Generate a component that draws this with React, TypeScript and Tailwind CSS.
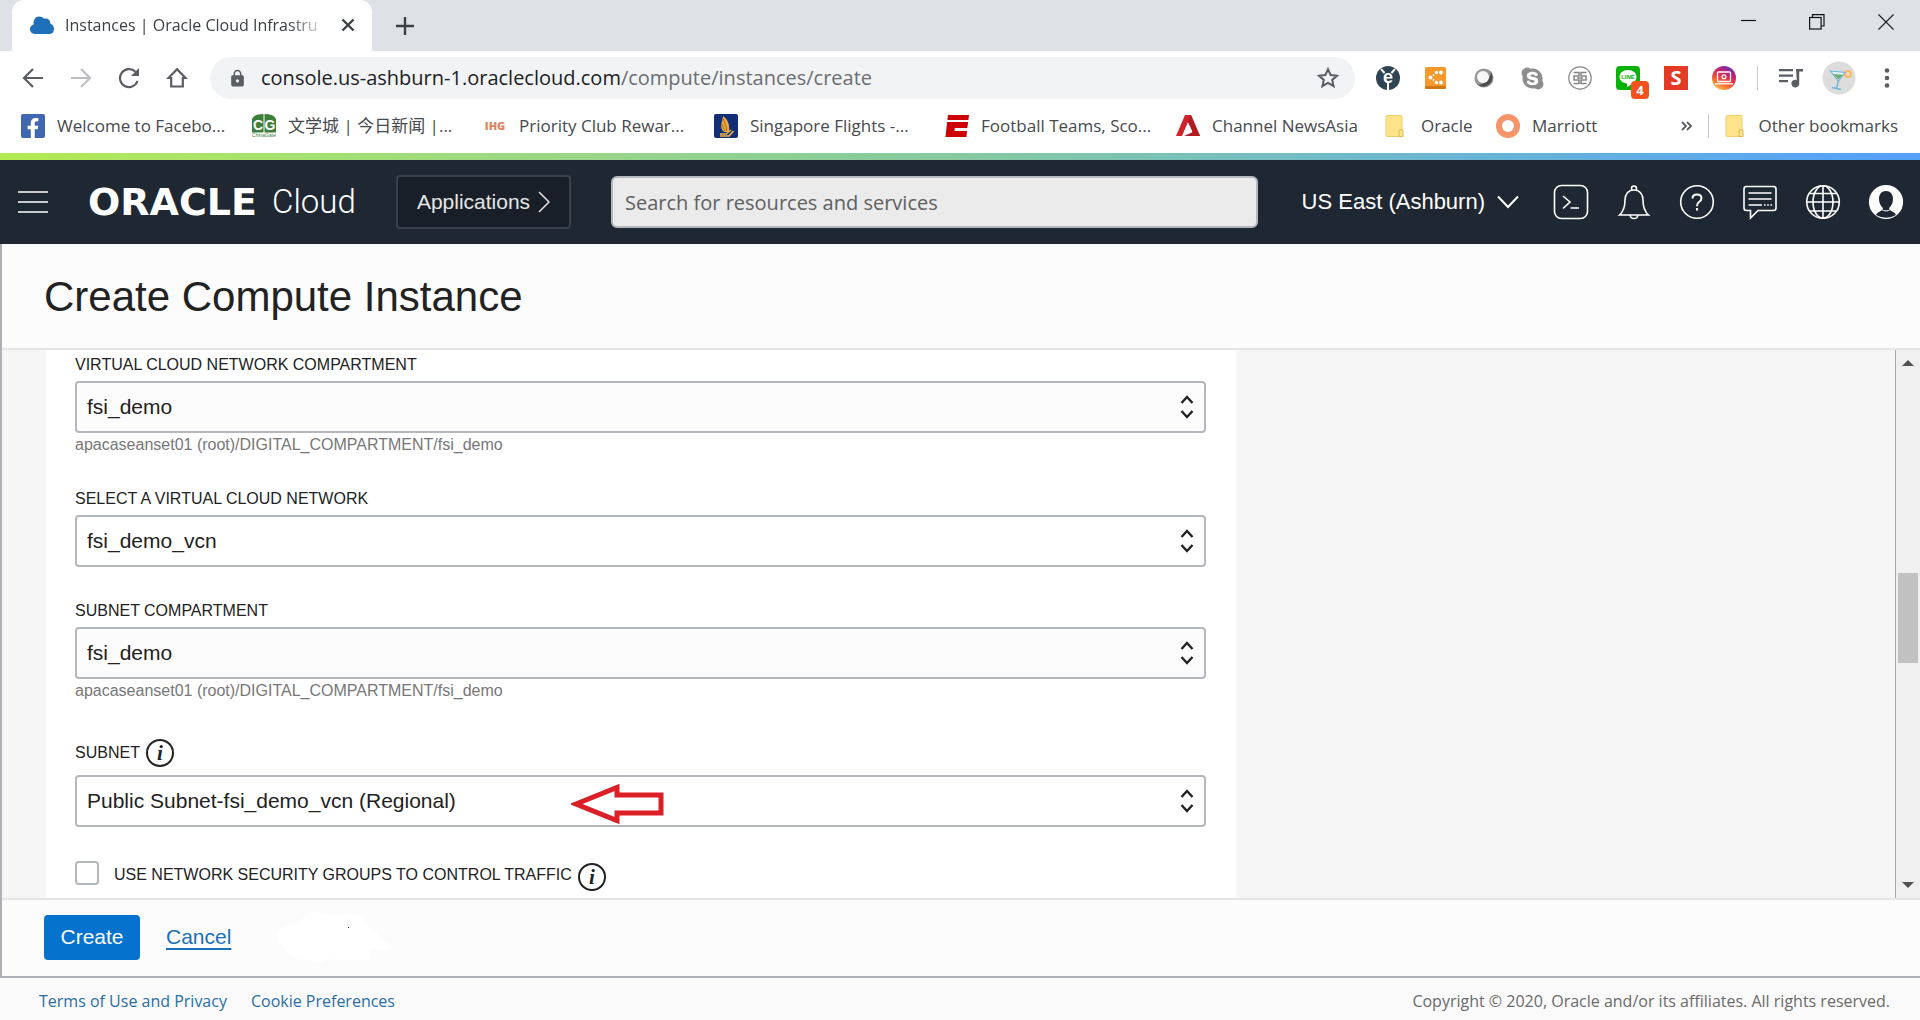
import React, { useState } from "react";
import { FaFacebookF, FaSkype } from "react-icons/fa";
import { MdLock } from "react-icons/md";

const UI = "font-['Open_Sans','Noto_Sans','Noto_Sans_CJK_SC',sans-serif]";
const ARIAL = "font-['Liberation_Sans',Arial,sans-serif]";

type Children = { children: React.ReactNode };

/* ---------- browser chrome ---------- */

function TabStrip() {
  return (
    <div className="flex h-[51px] items-stretch bg-[#dee1e6] pl-3">
      <div className="flex w-[360px] items-center rounded-t-xl bg-white pr-4 pb-0.5 pl-[17px]">
        <svg width="26" height="20" viewBox="0 0 26 20" className="shrink-0">
          <path d="M6 19C2.600 19 1 17 1 14.300C1 11.800 2.300 10 4.600 9.400C4.200 5 6.500 1.500 10 1.500C12.200 1.500 13.800 2.400 15 3.800C19 2.500 21.500 5.500 21.400 8.800C23.800 9.500 25 11.500 25 14C25 17 23.200 19 20 19Z" fill="#1f70b8" />
        </svg>
        <span className="ml-2.5 flex-1 text-[16px] leading-6 whitespace-nowrap text-[#3c4043] [mask-image:linear-gradient(to_right,black_85%,transparent_100%)]">
          Instances | Oracle Cloud Infrastru
        </span>
        <button type="button" aria-label="Close tab" className="ml-3 shrink-0">
          <svg width="16" height="16" viewBox="0 0 16 16" stroke="#3c4043" strokeWidth="2.4" fill="none">
            <path d="M2.500 2.500L13.500 13.500M13.500 2.500L2.500 13.500" />
          </svg>
        </button>
      </div>
      <button type="button" aria-label="New tab" className="ml-6 self-center">
        <svg width="18" height="18" viewBox="0 0 18 18" stroke="#3c4043" strokeWidth="2.4" fill="none">
          <path d="M9 0V18M0 9H18" />
        </svg>
      </button>
      <div className="ml-auto flex gap-[53px] pt-3.5 pr-[26px]">
        <button type="button" aria-label="Minimize" className="h-4">
          <svg width="16" height="16" viewBox="0 0 16 16" stroke="#111" fill="none"><path d="M1 6.500H16" strokeWidth="1.200" /></svg>
        </button>
        <button type="button" aria-label="Restore" className="h-4">
          <svg width="16" height="16" viewBox="0 0 16 16" stroke="#111" fill="none" strokeWidth="1.200">
            <rect x="0.600" y="3.500" width="11.500" height="11.500" /><path d="M3.500 3.500V0.600H15V12H12" />
          </svg>
        </button>
        <button type="button" aria-label="Close" className="h-4">
          <svg width="16" height="16" viewBox="0 0 16 16" stroke="#222" fill="none" strokeWidth="1.200"><path d="M0.500 0.500L15.500 15.500M15.500 0.500L0.500 15.500" /></svg>
        </button>
      </div>
    </div>
  );
}

function ToolButton({ label, children }: Children & { label: string }) {
  return (
    <button type="button" aria-label={label} className="relative flex size-12 shrink-0 items-center justify-center">
      {children}
    </button>
  );
}

function Extensions() {
  return (
    <>
      <ToolButton label="E extension">
        <svg width="24" height="24" viewBox="0 0 24 24">
          <circle cx="12" cy="12" r="12" fill="#2f4554" />
          <path d="M12 17V24M5 3L8.500 7M19 3L15.500 7" fill="none" stroke="#fff" strokeWidth="2" />
          <text x="12" y="17" textAnchor="middle" fontFamily="Liberation Sans" fontWeight="700" fontSize="18" fill="#fff">e</text>
        </svg>
      </ToolButton>
      <ToolButton label="Share graph">
        <svg width="22" height="24" viewBox="0 0 22 24">
          <rect y="1" width="21" height="22" rx="2" fill="#f7982a" />
          <rect y="20" width="21" height="3" rx="1" fill="#cf7714" />
          <g fill="#fff"><circle cx="16" cy="6.500" r="2" /><circle cx="11.500" cy="6.500" r="1.700" /><circle cx="8.500" cy="9" r="1" /><circle cx="5.500" cy="11.500" r="2" /><circle cx="8.500" cy="14" r="1" /><circle cx="11.500" cy="16.500" r="1.700" /><circle cx="16" cy="16.500" r="2" /></g>
        </svg>
      </ToolButton>
      <ToolButton label="Webex">
        <svg width="20" height="20" viewBox="0 0 20 20">
          <circle cx="10" cy="10" r="9.500" fill="#969696" />
          <path d="M17 4A9.500 9.500 0 0 1 3 16.500C9 17.500 16 13 17 4Z" fill="#4c4c4c" />
          <circle cx="9" cy="9" r="6" fill="#f7f7f7" />
        </svg>
      </ToolButton>
      <ToolButton label="Skype"><FaSkype size={25} color="#8d8d8d" /></ToolButton>
      <ToolButton label="Seal">
        <svg width="24" height="24" viewBox="0 0 24 24" fill="none" stroke="#858585" strokeWidth="1.500">
          <circle cx="12" cy="12" r="11.200" strokeWidth="1.200" />
          <path d="M5.500 6.500H11V10H6V14H11V17.500H5.500M18.500 6.500H13V10H18V14H13V17.500H18.500M9 12H15" />
        </svg>
      </ToolButton>
      <ToolButton label="Line">
        <svg width="24" height="24" viewBox="0 0 24 24">
          <rect width="24" height="24" rx="4" fill="#06b206" />
          <path d="M12 4C7 4 3.500 7 3.500 11C3.500 14.500 7 17 11 17.600V21C15 19 20.500 15.500 20.500 11C20.500 7 17 4 12 4Z" fill="#fff" />
          <text x="12" y="13" textAnchor="middle" fontFamily="Liberation Sans" fontWeight="700" fontSize="6" fill="#06b206">LINE</text>
        </svg>
        <span className="absolute top-[27px] left-[27px] flex h-[18px] w-[18px] items-center justify-center rounded-sm bg-[#f4511e] text-[13px] leading-none font-bold text-white">4</span>
      </ToolButton>
      <ToolButton label="S extension">
        <span className="flex size-6 items-center justify-center bg-[#e23a26] text-[20px] leading-none font-bold text-white">S</span>
      </ToolButton>
      <ToolButton label="Desktop capture">
        <svg width="24" height="24" viewBox="0 0 24 24">
          <defs>
            <linearGradient id="capture" x1="0.200" y1="1" x2="0.700" y2="0">
              <stop offset="0" stopColor="#fdc54b" /><stop offset="0.350" stopColor="#f2602f" /><stop offset="0.650" stopColor="#d3245f" /><stop offset="1" stopColor="#6a2bb5" />
            </linearGradient>
          </defs>
          <circle cx="12" cy="12" r="12" fill="url(#capture)" />
          <g fill="none" stroke="#fff" strokeWidth="1.300"><rect x="5.500" y="6" width="13" height="9.500" rx="1" /><circle cx="12" cy="10.700" r="1.900" /><path d="M3 17.800H21" /></g>
        </svg>
      </ToolButton>
    </>
  );
}

function Toolbar() {
  return (
    <div className="flex h-[54px] items-center bg-white pr-[9px] pl-[9px]">
      <ToolButton label="Back">
        <svg width="22" height="22" viewBox="0 0 22 22" fill="none" stroke="#5a5d61" strokeWidth="2.200"><path d="M21 11H2.500M11 2L2 11L11 20" /></svg>
      </ToolButton>
      <ToolButton label="Forward">
        <svg width="22" height="22" viewBox="0 0 22 22" fill="none" stroke="#bdbfc2" strokeWidth="2.200"><path d="M1 11H19.500M11 2L20 11L11 20" /></svg>
      </ToolButton>
      <ToolButton label="Reload">
        <svg width="22" height="22" viewBox="0 0 22 22"><path d="M19.500 14A9 9 0 1 1 17.500 4.800" fill="none" stroke="#5a5d61" strokeWidth="2.200" /><path d="M21 1V9H13Z" fill="#5a5d61" /></svg>
      </ToolButton>
      <ToolButton label="Home">
        <svg width="22" height="22" viewBox="0 0 22 22" fill="none" stroke="#5a5d61" strokeWidth="2.200"><path d="M11 2.200L2.500 11H5.200V19.500H16.800V11H19.500Z" /></svg>
      </ToolButton>
      <label className="ml-[9px] flex h-[42px] min-w-0 flex-1 items-center rounded-full bg-[#f1f3f4] pr-[15px] pl-[18px]">
        <MdLock size={19} color="#5a5d61" className="shrink-0" />
        <span className="relative ml-[14px] min-w-0 flex-1 text-[20px] leading-7 whitespace-nowrap">
          <span className="pointer-events-none absolute inset-0 text-[#6b6e72]">
            <span className="text-[#202124]">console.us-ashburn-1.oraclecloud.com</span>/compute/instances/create
          </span>
          <input aria-label="Address" className="block w-full bg-transparent text-transparent outline-none" />
        </span>
        <svg width="24" height="24" viewBox="0 0 24 24" fill="none" stroke="#5a5d61" strokeWidth="2" className="shrink-0"><path d="M12 3.200L14.600 9L21 9.700L16.200 13.900L17.600 20.200L12 16.900L6.400 20.200L7.800 13.900L3 9.700L9.400 9Z" /></svg>
      </label>
      <div className="ml-[9px] flex items-center">
        <Extensions />
        <span className="mx-[9px] h-6 w-px bg-[#c8cacd]" />
        <ToolButton label="Media controls">
          <svg width="24" height="20" viewBox="0 0 24 20" fill="#5a5d61"><path d="M0 1H14V3.200H0ZM0 6.500H14V8.700H0ZM0 12H9V14.200H0ZM17 1H24V3.400H20.200V15.500A3.900 3.900 0 1 1 17.800 12Z" /></svg>
        </ToolButton>
        <ToolButton label="Profile">
          <svg width="34" height="34" viewBox="0 0 34 34">
            <circle cx="17" cy="17" r="16.500" fill="#dcdcdc" />
            <circle cx="26" cy="13" r="4" fill="#f6b868" /><circle cx="26" cy="13" r="2" fill="#fbdcb0" />
            <path d="M8.500 10L23 11.500L16.500 20Z" fill="#e8f7fb" stroke="#6cb8da" strokeWidth="1.200" />
            <path d="M11 13L21 13.800L16.500 18.500Z" fill="#6fae6c" />
            <path d="M16.500 20L14.500 27M10 26.500L19 28.500" stroke="#6cb8da" strokeWidth="1.600" fill="none" />
          </svg>
        </ToolButton>
        <ToolButton label="Menu">
          <svg width="6" height="20" viewBox="0 0 6 20" fill="#5a5d61"><circle cx="3" cy="2.500" r="2.300" /><circle cx="3" cy="10" r="2.300" /><circle cx="3" cy="17.500" r="2.300" /></svg>
        </ToolButton>
      </div>
    </div>
  );
}

function Folder() {
  return (
    <svg width="24" height="24" viewBox="0 0 24 24" className="shrink-0">
      <path d="M1 2.500Q1 1.500 2 1.500H16Q17 1.500 17 2.500V22.500H2Q1 22.500 1 21.500Z" fill="#fde48b" stroke="#edcf6a" />
      <path d="M14 22.500V17Q14 15.500 16 15.500Q18 15.500 18 17V22.500Z" fill="#fde48b" stroke="#dcb94c" />
    </svg>
  );
}

const bookmarks = [
  {
    text: "Welcome to Facebo...", width: "w-[231px]",
    icon: <span className="flex size-6 shrink-0 items-end justify-end rounded-xs bg-[#4267b2] pr-0.5"><FaFacebookF size={20} color="#fff" /></span>,
  },
  {
    text: "文学城 | 今日新闻 |...", width: "w-[231px]",
    icon: (
      <svg width="24" height="24" viewBox="0 0 24 24" className="shrink-0">
        <path d="M0 5Q2 0 11.500 0V18.500H0ZM12.500 0Q22 0 24 5V18.500H12.500Z" fill="#3f7d3a" />
        <text x="6" y="15.500" textAnchor="middle" fontFamily="Liberation Sans" fontWeight="700" fontSize="14" fill="#fff">C</text>
        <text x="18" y="15.500" textAnchor="middle" fontFamily="Liberation Sans" fontWeight="700" fontSize="14" fill="#fff">G</text>
        <text x="12" y="23" textAnchor="middle" fontFamily="Liberation Sans" fontSize="5" fill="#3f7d3a">ChinaGate</text>
      </svg>
    ),
  },
  {
    text: "Priority Club Rewar...", width: "w-[231px]",
    icon: <span className="w-6 shrink-0 text-center text-[11px] leading-6 font-extrabold text-[#e5805c]">IHG</span>,
  },
  {
    text: "Singapore Flights -...", width: "w-[231px]",
    icon: (
      <svg width="24" height="24" viewBox="0 0 24 24" className="shrink-0">
        <rect width="24" height="24" rx="2" fill="#122e74" />
        <path d="M9 2C13 5 16 9 15 18L10 18C5 13 8 10 9 2Z" fill="#f0a83a" />
        <path d="M9.500 5C10 9 13 12 12.500 17M8 10C8.500 13 10.500 15 10.500 17" stroke="#8a5a1c" strokeWidth="0.800" fill="none" />
        <path d="M6 22H15L19.500 17M6 20L12 20L17 16" stroke="#f0b64a" strokeWidth="1.600" fill="none" />
      </svg>
    ),
  },
  {
    text: "Football Teams, Sco...", width: "w-[231px]",
    icon: (
      <svg width="24" height="24" viewBox="0 0 24 24" fill="#cc0000" className="shrink-0">
        <path d="M3 1H24L23.400 6H2.400ZM2.100 8H23.200L22.300 14H9.800L9.500 17H22L21.400 23H0.500Z" />
      </svg>
    ),
  },
  {
    text: "Channel NewsAsia", width: "w-[209px]",
    icon: (
      <svg width="24" height="24" viewBox="0 0 24 24" className="shrink-0">
        <path d="M9 1H15L24 22H18L12 8L6 22H0Z" fill="#d0242b" />
        <path d="M15 1L24 22H8L17 18L12 8Z" fill="#b01c22" />
        <path d="M12 9L16 17L8.500 20Z" fill="#fff" />
      </svg>
    ),
  },
  { text: "Oracle", width: "w-[111px]", icon: <Folder /> },
  {
    text: "Marriott", width: "w-[120px]",
    icon: <span className="size-6 shrink-0 rounded-full border-[6px] border-[#f6956a]" />,
  },
];

function BookmarksBar() {
  return (
    <nav className="flex h-12 items-center bg-white pr-[22px] pb-1.5 pl-[21px] text-[17px] leading-6 text-[#46494d]">
      {bookmarks.map((b) => (
        <a key={b.text} href="#" className={`flex items-center gap-3 whitespace-nowrap ${b.width}`}>
          {b.icon}
          {b.text}
        </a>
      ))}
      <div className="ml-auto flex items-center">
        <button type="button" aria-label="More bookmarks">
          <svg width="11" height="10" viewBox="0 0 11 10" fill="none" stroke="#5a5d61" strokeWidth="1.800"><path d="M1 1L5 5L1 9M6 1L10 5L6 9" /></svg>
        </button>
        <span className="mx-4 h-6 w-px bg-[#c8cacd]" />
        <a href="#" className="flex items-center gap-[9px] whitespace-nowrap"><Folder />Other bookmarks</a>
      </div>
    </nav>
  );
}

/* ---------- cloud console ---------- */

function HeaderButton({ label, children }: Children & { label: string }) {
  return (
    <button type="button" aria-label={label}>
      <svg width="36" height="36" viewBox="0 0 36 36" fill="none" stroke="#fff" strokeWidth="1.600">{children}</svg>
    </button>
  );
}

function ConsoleHeader() {
  return (
    <header className={`flex h-[84px] items-center bg-[#1e2732] pr-4 pl-[18px] text-white ${ARIAL}`}>
      <button type="button" aria-label="Navigation menu" className="shrink-0">
        <svg width="30" height="22" viewBox="0 0 30 22" stroke="#fff" strokeWidth="1.500"><path d="M0 1H30M0 11H30M0 21H30" /></svg>
      </button>
      <a href="#" className="ml-10 flex shrink-0 items-center whitespace-nowrap">
        <span className="w-[184px] font-['DejaVu_Sans',sans-serif] text-[38px] leading-10 font-bold">ORACLE</span>
        <span className="w-[84px] font-['Roboto',sans-serif] text-[33px] leading-10 font-light">Cloud</span>
      </a>
      <button type="button" className="ml-10 flex h-[54px] w-[175px] shrink-0 items-center justify-center gap-2 rounded-sm border-2 border-[#39424c] bg-[#181f28] text-[21px] text-[#e6e6e6]">
        Applications
        <svg width="12" height="22" viewBox="0 0 12 22" fill="none" stroke="#e6e6e6" strokeWidth="1.500"><path d="M1 1L11 11L1 21" /></svg>
      </button>
      <input
        type="search"
        aria-label="Search"
        placeholder="Search for resources and services"
        className={`ml-10 h-[52px] min-w-0 flex-1 rounded-md border-2 border-[#b4b9c0] bg-[#ebebeb] px-3 text-[20px] text-[#333] placeholder:text-[#606060] ${UI}`}
      />
      <button type="button" className="ml-11 flex shrink-0 items-center gap-3 text-[22px] leading-8">
        US East (Ashburn)
        <svg width="22" height="14" viewBox="0 0 22 14" fill="none" stroke="#fff" strokeWidth="2"><path d="M1 1.500L11 12L21 1.500" /></svg>
      </button>
      <div className="ml-[34px] flex shrink-0 gap-[27px]">
        <HeaderButton label="Cloud shell"><rect x="1.500" y="1.500" width="33" height="33" rx="7" /><path d="M10 12L17 18L10 24.500M17.500 24H26" /></HeaderButton>
        <HeaderButton label="Announcements"><path d="M3.500 31C8 27 9 23 9 16C9 10 12.500 6 18 6C23.500 6 27 10 27 16C27 23 28 27 32.500 31ZM15.500 6.500V4.500Q15.500 2 18 2Q20.500 2 20.500 4.500V6.500M14 31Q14.500 34.500 18 34.500Q21.500 34.500 22 31" /></HeaderButton>
        <HeaderButton label="Help"><circle cx="18" cy="18" r="16.300" /><path d="M13.500 14.500Q13.500 10.500 18 10.500Q22.500 10.500 22.500 14.200Q22.500 16.500 20 18Q18 19.300 18 22.300M18 24V26.500" strokeWidth="2" /></HeaderButton>
        <HeaderButton label="Feedback"><path d="M4.500 2.500H31.500Q34 2.500 34 5V24Q34 26.500 31.500 26.500H16L8.500 34V26.500H4.500Q2 26.500 2 24V5Q2 2.500 4.500 2.500ZM6.500 9H29.500M6.500 15H29.500M6.500 21H20" /><path d="M22 21H30" strokeDasharray="1.600 1.600" /></HeaderButton>
        <HeaderButton label="Language"><circle cx="18" cy="18" r="16.300" /><ellipse cx="18" cy="18" rx="10" ry="16.300" /><path d="M18 1.700V34.300M1.700 18H34.300M4.500 9.500H31.500M4.500 27H31.500" /></HeaderButton>
        <HeaderButton label="Profile">
          <circle cx="18" cy="18" r="16.300" fill="#fff" />
          <path d="M18 7C13.500 7 11 10.500 11 15C11 19 13 22.500 15 24Q15 26 10 28.500Q8 30 8 31Q12.500 33.800 18 33.800Q23.500 33.800 28 31Q28 30 26 28.500Q21 26 21 24C23 22.500 25 19 25 15C25 10.500 22.500 7 18 7Z" fill="#1e2732" stroke="none" />
          <path d="M13 25Q18 29 23 25" strokeWidth="1" />
        </HeaderButton>
      </div>
    </header>
  );
}

function InfoIcon() {
  return (
    <button type="button" aria-label="More information" className="flex size-7 shrink-0 items-center justify-center rounded-full border-2 border-[#222] font-['Liberation_Serif',serif] text-[21px] leading-none font-bold text-[#222] italic">
      i
    </button>
  );
}

type FieldProps = { id: string; label: string; value: string; path?: string; muted?: boolean; info?: boolean; pointed?: boolean };

function SelectField({ id, label, value, path, muted, info, pointed }: FieldProps) {
  return (
    <div>
      <div className={info ? "flex items-center gap-1.5 pt-1 pb-0.5" : "flex"}>
        <label htmlFor={id} className="text-[16px] leading-5">{label}</label>
        {info && <InfoIcon />}
      </div>
      <div className="relative mt-1.5">
        <select id={id} className={`block h-[52px] w-full appearance-none rounded-sm border-2 border-[#b4b8bc] px-2.5 text-[21px] ${muted ? "bg-[#fcfcfc]" : "bg-white"}`}>
          <option>{value}</option>
        </select>
        <svg width="14" height="24" viewBox="0 0 14 24" fill="none" stroke="#222" strokeWidth="2.400" className="pointer-events-none absolute top-3.5 right-3">
          <path d="M1.500 8L7 2L12.500 8M1.500 16L7 22L12.500 16" />
        </svg>
        {pointed && (
          <svg width="94" height="42" viewBox="0 0 94 42" fill="none" stroke="#dc1f26" strokeWidth="5" className="pointer-events-none absolute top-2 left-[496px]">
            <path d="M5 21L46 4.500V12H90V30H46V37.500Z" />
          </svg>
        )}
      </div>
      {path && <p className="mt-0.5 text-[16px] leading-5 text-[#777]">{path}</p>}
    </div>
  );
}

function Scrollbar() {
  return (
    <div className="flex w-[25px] shrink-0 flex-col items-center border-l border-[#a8a8a8] bg-[#f0f0f0] py-2.5">
      <svg width="12" height="6" viewBox="0 0 12 6" fill="#505050"><path d="M6 0L12 6H0Z" /></svg>
      <div className="grow-[207]" />
      <div className="w-5 grow-[90] bg-[#c1c1c1]" />
      <div className="grow-[219]" />
      <svg width="12" height="6" viewBox="0 0 12 6" fill="#505050"><path d="M0 0H12L6 6Z" /></svg>
    </div>
  );
}

function InstanceForm() {
  const [useNsg, setUseNsg] = useState(false);
  return (
    <form className="flex w-full max-w-[1190px] flex-col gap-[34px] bg-white pt-[5px] pr-[30px] pl-[29px]">
      <SelectField id="vcn-compartment" label="VIRTUAL CLOUD NETWORK COMPARTMENT" value="fsi_demo" path="apacaseanset01 (root)/DIGITAL_COMPARTMENT/fsi_demo" muted />
      <SelectField id="vcn" label="SELECT A VIRTUAL CLOUD NETWORK" value="fsi_demo_vcn" />
      <SelectField id="subnet-compartment" label="SUBNET COMPARTMENT" value="fsi_demo" path="apacaseanset01 (root)/DIGITAL_COMPARTMENT/fsi_demo" muted />
      <SelectField id="subnet" label="SUBNET" value="Public Subnet-fsi_demo_vcn (Regional)" info pointed />
      <div className="flex items-start">
        <input id="nsg" type="checkbox" checked={useNsg} onChange={(e) => setUseNsg(e.target.checked)} className="size-6 appearance-none rounded-sm border-2 border-[#b4b8bc] bg-white checked:bg-[#0572ce]" />
        <label htmlFor="nsg" className="mt-1 mr-1.5 ml-[15px] text-[16px] leading-5">USE NETWORK SECURITY GROUPS TO CONTROL TRAFFIC</label>
        <span className="mt-0.5"><InfoIcon /></span>
      </div>
    </form>
  );
}

export default function App() {
  return (
    <div className={`flex h-screen flex-col overflow-hidden bg-white ${UI}`}>
      <TabStrip />
      <Toolbar />
      <BookmarksBar />
      <div className="h-[7px] shrink-0 bg-linear-to-r from-[#b4ea50] via-[#86c9a0] to-[#549ffc]" />
      <ConsoleHeader />
      <div className={`flex min-h-0 flex-1 flex-col border-b-2 border-l-2 border-[#adb0b4] bg-[#fcfcfc] text-[#222] ${ARIAL}`}>
        <h1 className="border-b-2 border-[#e5e5e5] px-[42px] pt-[29px] pb-[27px] text-[42px] leading-12">Create Compute Instance</h1>
        <div className="flex min-h-0 flex-1">
          <main className="flex min-w-0 flex-1 overflow-hidden bg-[#f6f6f6] pl-11"><InstanceForm /></main>
          <Scrollbar />
        </div>
        <div className="flex h-[78px] shrink-0 items-center border-t-2 border-[#e5e5e5] pb-0.5 pl-[42px] text-[21px]">
          <button type="button" className="h-[45px] w-24 rounded-sm bg-[#0572ce] text-white">Create</button>
          <a href="#" className="ml-[26px] text-[#1b6fb5] underline underline-offset-4">Cancel</a>
          <svg width="120" height="56" viewBox="0 0 120 56" className="ml-11">
            <path d="M2 26Q2 16 26 14Q28 0 46 4Q60 8 70 4Q90 4 94 18Q104 22 104 30Q118 34 118 40Q108 44 96 40V50Q70 52 52 50Q46 56 38 52Q10 50 10 38Q0 34 2 26Z" fill="#fff" />
            <rect x="73" y="18" width="1" height="1" fill="#222" />
          </svg>
        </div>
      </div>
      <footer className="flex h-[42px] shrink-0 items-center gap-6 bg-[#fafafa] pr-[30px] pl-[39px] pt-1 text-[16px] leading-6 text-[#2a6ea6]">
        <a href="#">Terms of Use and Privacy</a>
        <a href="#">Cookie Preferences</a>
        <span className="ml-auto text-[#6a6a6a]">Copyright © 2020, Oracle and/or its affiliates. All rights reserved.</span>
      </footer>
    </div>
  );
}
